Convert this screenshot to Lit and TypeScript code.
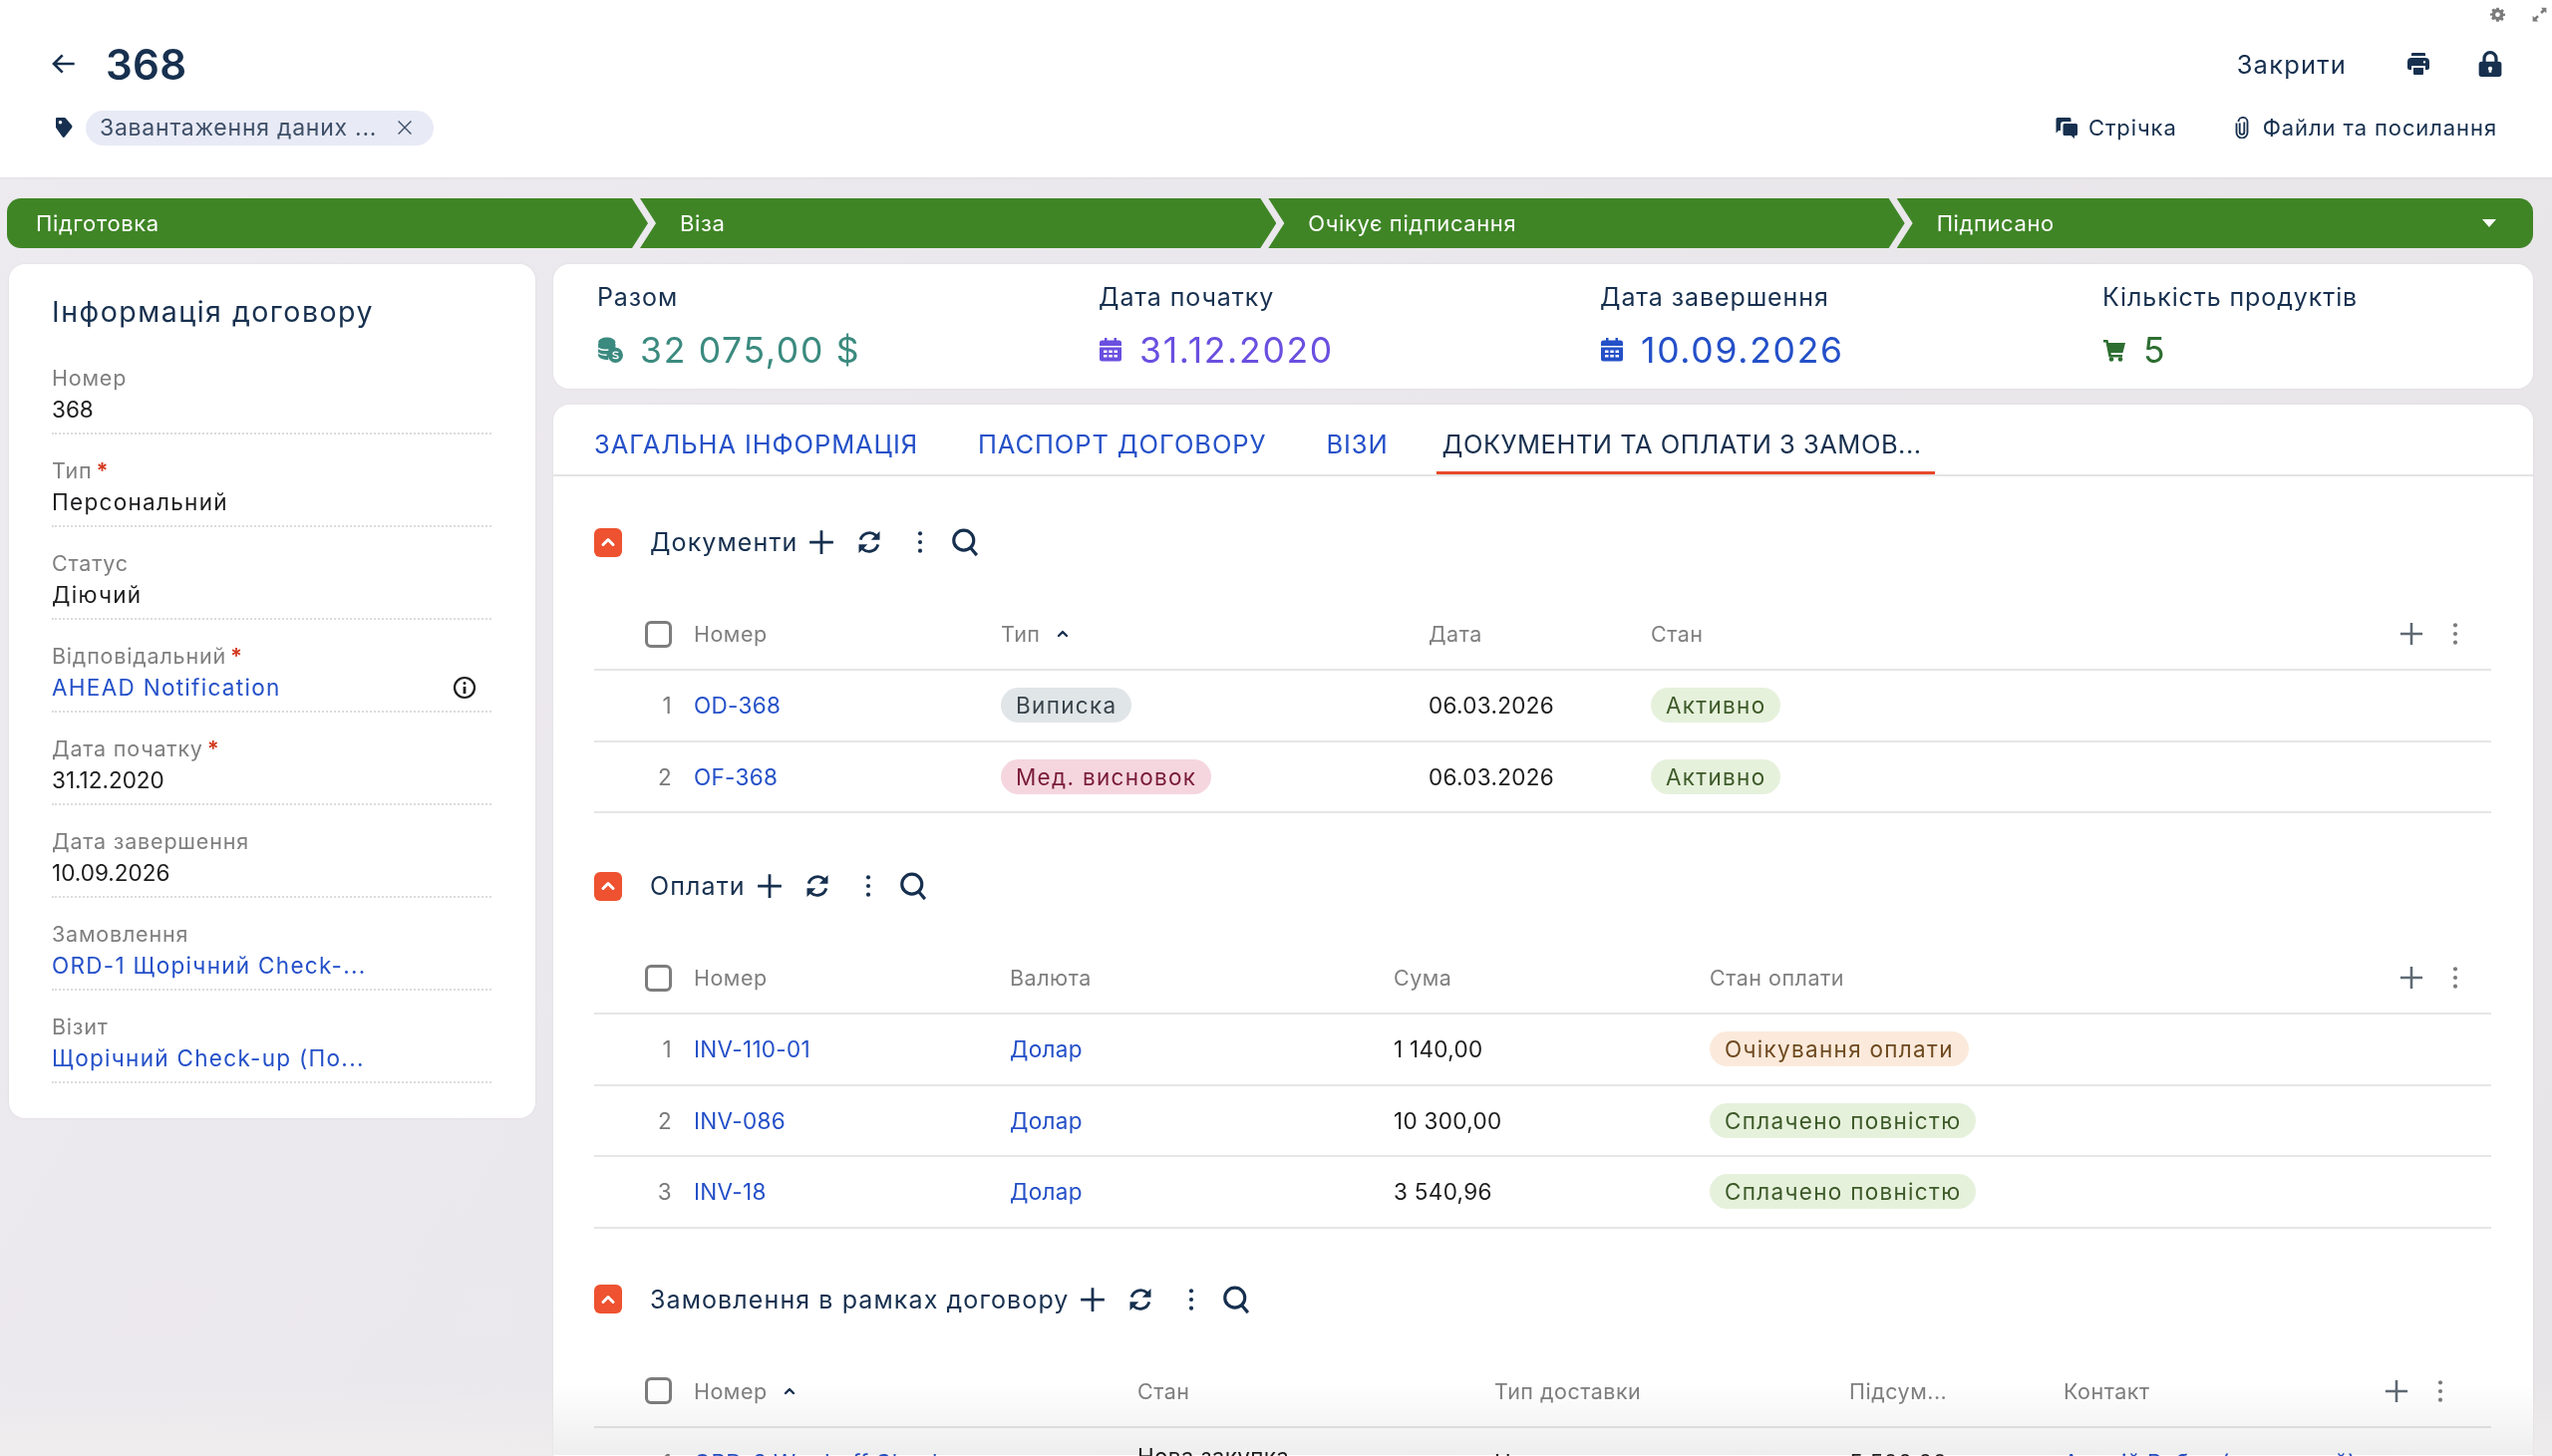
import { LitElement, html, css, svg } from "lit";
import { customElement } from "lit/decorators.js";

const I = {
  back: svg`<path d="M20 12H5M11 5.500 4.500 12l6.500 6.500" fill="none" stroke="currentColor" stroke-width="2"/>`,
  tag: svg`<path fill-rule="evenodd" d="M5 2h7.500a2 2 0 0 1 1.500.7l6 7a2 2 0 0 1 0 2.600l-7 9a1.500 1.500 0 0 1-2.400 0L4 12V3a1 1 0 0 1 1-1zm3.500 3a1.800 1.800 0 1 0 0 3.600 1.800 1.800 0 0 0 0-3.600z" fill="currentColor"/>`,
  close: svg`<path d="M5 5l14 14M19 5 5 19" stroke="currentColor" stroke-width="1.500" fill="none"/>`,
  printer: svg`<path fill="currentColor" fill-rule="evenodd" d="M6 1h12a1 1 0 0 1 1 1v2H5V2a1 1 0 0 1 1-1zM5 6h14a4 4 0 0 1 4 4v6a2 2 0 0 1-2 2h-2v-4H5v4H3a2 2 0 0 1-2-2v-6a4 4 0 0 1 4-4zm13 3a1.200 1.200 0 1 0 0 2.400A1.200 1.200 0 0 0 18 9zM7 16h10v6a1 1 0 0 1-1 1H8a1 1 0 0 1-1-1z"/>`,
  lock: svg`<path fill-rule="evenodd" fill="currentColor" d="M12 0a7 7 0 0 1 7 7v3h1a2.500 2.500 0 0 1 2.500 2.500v9A2.500 2.500 0 0 1 20 24H4a2.500 2.500 0 0 1-2.500-2.500v-9A2.500 2.500 0 0 1 4 10h1V7a7 7 0 0 1 7-7zm0 3a4 4 0 0 0-4 4v3h8V7a4 4 0 0 0-4-4zm0 11.500a2 2 0 0 0-1.200 3.600V20h2.400v-1.900A2 2 0 0 0 12 14.500z"/>`,
  chat: svg`<path fill="currentColor" d="M3 2h12a1.500 1.500 0 0 1 1.500 1.500V6H9a3 3 0 0 0-3 3v6H4l-2.500 2.500V3.500A1.500 1.500 0 0 1 3 2zM10 8h11.500A1.500 1.500 0 0 1 23 9.500v9a1.500 1.500 0 0 1-1.500 1.500H20v3l-3.500-3H10a1.500 1.500 0 0 1-1.500-1.500v-9A1.500 1.500 0 0 1 10 8z"/>`,
  clip: svg`<path d="M9.500 7v10a2.500 2.500 0 0 0 5 0V6M6 7v10.500a6 6 0 0 0 12 0V6.500a5 5 0 0 0-10-1" fill="none" stroke="currentColor" stroke-width="2"/>`,
  gear: svg`<path fill="currentColor" fill-rule="evenodd" d="M10 1h4l.7 3.200 1.900.8 2.800-1.800 2.800 2.800-1.800 2.800.8 1.900L24 10.500v3.500l-3.200.7-.8 1.900 1.800 2.800-2.800 2.800-2.800-1.800-1.900.8L14 23.500h-4l-.7-3.300-1.900-.8-2.800 1.800-2.800-2.800 1.800-2.800-.8-1.900L0 14v-3.500l3.200-.7.800-1.900L2.200 5.100 5 2.300l2.800 1.800 1.900-.8zM12 8.500a3.800 3.800 0 1 0 0 7.600 3.800 3.800 0 0 0 0-7.600z"/>`,
  expand: svg`<path fill="currentColor" d="M14 1h9v9l-3-3-4 4-3-3 4-4zM10 23H1v-9l3 3 4-4 3 3-4 4z"/>`,
  money: svg`<ellipse cx="9" cy="5" rx="8" ry="4.500" fill="currentColor"/><path fill="currentColor" d="M1 6.500h16V12a8 8 0 0 0-6.500 9.500C5 21 1 19.500 1 17z"/><path d="M1 10.500c2 1.500 6 2 9.500 1.500M1 15c2 1.500 5 2 8 1.800" stroke="#fff" stroke-width="1.200" fill="none"/><circle cx="17" cy="17" r="7" fill="currentColor"/><path d="M19.500 14.700c-.5-.9-4.500-1.300-4.700.7-.2 2 4.600 1.200 4.600 3.200 0 1.800-4 1.600-5 .4" stroke="#fff" stroke-width="1.300" fill="none"/>`,
  cal: svg`<path fill="currentColor" fill-rule="evenodd" d="M6 0h2.500v2.500h7V0H18v2.500h2.500A2.500 2.500 0 0 1 23 5v3H1V5a2.500 2.500 0 0 1 2.500-2.500H6zM1 9.500h22V21a2.500 2.500 0 0 1-2.500 2.500h-17A2.500 2.500 0 0 1 1 21zm4 3v2.500h3.500v-2.500zm5.300 0v2.500h3.500v-2.500zm5.200 0v2.500H19v-2.500zM5 17v2.500h3.500V17zm5.300 0v2.500h3.500V17zm5.200 0v2.500H19V17z"/>`,
  cart: svg`<path fill="currentColor" d="M1 2h4.500l.7 3H23l-2.500 10H8.500l.4 2H20v2.500H6.500L3.500 4.500H1z"/><circle cx="9" cy="21.500" r="2.300" fill="currentColor"/><circle cx="18" cy="21.500" r="2.300" fill="currentColor"/>`,
  info: svg`<circle cx="12" cy="12" r="10" fill="none" stroke="currentColor" stroke-width="2.200"/><circle cx="12" cy="7.500" r="1.500" fill="currentColor"/><path d="M12 11v7" stroke="currentColor" stroke-width="2.800"/>`,
  chev: svg`<path d="M6 15l6-6 6 6" fill="none" stroke="currentColor" stroke-width="3.600" stroke-linecap="round" stroke-linejoin="round"/>`,
  plus: svg`<path d="M12 2.500v19M2.500 12h19" stroke="currentColor" stroke-width="2.200" fill="none"/>`,
  sync: svg`<path d="M4.500 10a8 8 0 0 1 13-4l1.500 1.500M19.500 14a8 8 0 0 1-13 4L5 16.500" fill="none" stroke="currentColor" stroke-width="2.500"/><path d="M21 2.500v7.500h-7.500zM3 21.500V14h7.500z" fill="currentColor"/>`,
  dots: svg`<circle cx="12" cy="4" r="1.900" fill="currentColor"/><circle cx="12" cy="12" r="1.900" fill="currentColor"/><circle cx="12" cy="20" r="1.900" fill="currentColor"/>`,
  search: svg`<circle cx="11" cy="10.500" r="8" fill="none" stroke="currentColor" stroke-width="2.500"/><path d="M16 16l5.500 6.500" stroke="currentColor" stroke-width="2.500"/>`,
};
const ic = (p: unknown, size: number, cls = "") =>
  html`<svg class="ic ${cls}" viewBox="0 0 24 24" width=${size} height=${size}>${p}</svg>`;

type Cell = { t: string; k?: string; c?: string };

@customElement("app-root")
export class AppRoot extends LitElement {
  static styles = css`
    :host {
      display: block; height: 100vh; overflow: hidden; position: relative;
      font-family: Inter, "Liberation Sans", sans-serif; color: #17304f;
      background: linear-gradient(180deg, #eeebeb00 calc(100% - 72px), #f1eeeecc), linear-gradient(120deg, #edeaf0, #e7e5e7);
    }
    .ic { display: block; flex: none; }
    .link { color: #2450c8; text-decoration: none; }

    header { height: 178px; background: #fff; box-sizing: border-box; padding: 0 52px; display: flex; flex-direction: column; position: relative; box-shadow: 0 1px 2px #0000000d; }
    .mini { position: absolute; top: 7px; right: 5px; display: flex; gap: 27px; color: #7b7b7b; }
    .h1 { height: 74px; margin-top: 27px; display: flex; align-items: center; }
    .h1 .back { margin: 0 26px 0 -4px; }
    .h1 .num { font-size: 42px; font-weight: 600; letter-spacing: 0.3px; }
    .spacer { flex: 1; }
    .close { font-size: 25.500px; margin-right: 60px; letter-spacing: 1.200px; }
    .h1 .print { margin-right: 47px; }
    .h1 .lock { margin-right: -3px; }
    .h2 { display: flex; align-items: center; margin-top: 9px; height: 36px; }
    .h2 .tagi { margin-right: 10px; margin-left: 0; }
    .chip { height: 35px; width: 349px; box-sizing: border-box; border-radius: 18px; background: #e8eaf6; display: flex; align-items: center; justify-content: space-between; padding: 0 18px 0 14px; font-size: 23px; letter-spacing: 0.750px; color: #3f5068; }
    .links { display: flex; align-items: center; font-size: 22px; letter-spacing: 0.900px; padding-right: 3px; }
    .links svg { margin-right: 10px; }
    .links .l1 { margin-right: 54px; }

    .bar { margin: 21px 19px 0 7px; height: 50px; display: grid; grid-template-columns: 643px 1fr 1fr 1fr; }
    .seg { background: #3f8526; color: #fff; font-size: 22px; letter-spacing: 0.600px; display: flex; align-items: center; justify-content: space-between; margin-left: -8px; padding-left: 40px; clip-path: polygon(0 0, calc(100% - 16px) 0, 100% 50%, calc(100% - 16px) 100%, 0 100%, 16px 50%); }
    .seg:first-child { margin-left: 0; padding-left: 29px; border-radius: 14px 0 0 14px; clip-path: polygon(0 0, calc(100% - 16px) 0, 100% 50%, calc(100% - 16px) 100%, 0 100%); }
    .seg:last-child { border-radius: 0 14px 14px 0; padding-right: 37px; clip-path: polygon(0 0, 100% 0, 100% 100%, 0 100%, 16px 50%); }
    .tri { width: 0; height: 0; border: 7px solid transparent; border-top: 8px solid #fff; border-bottom: 0; }

    main { display: grid; grid-template-columns: 528px 1fr; gap: 18px; margin: 16px 19px 0 9px; align-items: start; }
    .card { background: #fff; border-radius: 16px; box-shadow: 0 0 3px #0000000f; }
    .info { padding: 30px 44px 14px 43px; box-sizing: border-box; }
    .info h2 { font-size: 28.500px; font-weight: 400; letter-spacing: 1.500px; margin: 0 0 33px; height: 36px; line-height: 36px; }
    .f { height: 72px; box-sizing: border-box; border-bottom: 2px dotted #dcdcdc; margin-bottom: 21px; }
    .f .lb { font-size: 21.500px; letter-spacing: 0.800px; color: #7f7f7f; height: 30px; line-height: 30px; }
    .req { color: #d33a1e; font-weight: 700; margin-left: 4px; }
    .f .val { font-size: 22.500px; letter-spacing: 1.300px; color: #1d1d1f; height: 34px; line-height: 34px; display: flex; justify-content: space-between; align-items: center; padding-right: 15px; white-space: nowrap; }
    .f .val.digits { letter-spacing: 0; }

    .right { display: flex; flex-direction: column; gap: 16px; }
    .stats { height: 125px; box-sizing: border-box; display: grid; grid-template-columns: 503px 503px 504px 1fr; padding: 16px 0 0 44px; }
    .stat .lb { font-size: 25px; letter-spacing: 0.9px; height: 34px; line-height: 34px; }
    .stat .v { display: flex; align-items: center; gap: 17px; margin-top: 17px; font-size: 35.500px; height: 38px; letter-spacing: 1.700px; }
    .teal { color: #3b8a7f; } .violet { color: #6a4fe0; } .blue { color: #2450c8; } .green { color: #2d6e31; }

    .tabs-card { height: 1100px; position: relative; }
    .tabs-card::after { content: ""; position: absolute; left: 0; right: 0; top: 982px; height: 72px; background: linear-gradient(180deg, #ffffff, #eeeeee); mix-blend-mode: multiply; pointer-events: none; }
    .tabs { height: 70px; border-bottom: 2px solid #e4e4e4; display: flex; padding-left: 41px; gap: 60px; }
    .tab { font-size: 25.500px; letter-spacing: 0.900px; color: #2450c8; display: flex; align-items: center; height: 70px; padding: 8px 0 0; box-sizing: border-box; white-space: nowrap; }
    .tab.on { color: #17304f; letter-spacing: 0.500px; box-shadow: inset 0 -3px 0 #e8492a; padding: 8px 13px 0 6px; margin-left: -12px; }

    .sec { padding: 0 42px 0 41px; }
    .sh { display: flex; align-items: center; height: 46px; margin-top: 43px; }
    .sec + .sec .sh { margin-top: 50px; }
    .sec:last-child .sh { margin-top: 48px; }
    .tg { width: 28px; height: 29px; border-radius: 6px; background: #ee5230; color: #fff; display: flex; align-items: center; justify-content: center; margin-right: 28px; }
    .sh .ti { font-size: 25px; letter-spacing: 1.100px; margin-right: 9px; }
    .sh .p { margin-right: 19px; }
    .sh .s { margin-right: 24px; }
    .sh .d { margin-right: 17px; }

    .row { display: grid; align-items: center; height: 71.500px; box-sizing: border-box; border-bottom: 2px solid #e6e6e6; font-size: 22.500px; letter-spacing: 0.300px; color: #1d1d1f; }
    .row.hd { height: 105px; padding-top: 33px; font-size: 21.500px; letter-spacing: 0.500px; color: #7f7f7f; margin-top: 1px; }
    .row > div { min-width: 0; white-space: nowrap; display: flex; align-items: center; }
    .sel { justify-content: flex-end; padding-right: 22px; }
    .idx { color: #7a7a7a; }
    .cb { width: 27px; height: 27px; box-sizing: border-box; border: 3px solid #7d7d7d; border-radius: 6px; }
    .sort { margin-left: 14px; color: #17304f; }
    .row .end { justify-content: flex-end; gap: 17px; color: #7a7a7a; padding-right: 23px; }
    .wide .row .end { padding-right: 38px; }
    .end .plus { color: #5f6a74; }
    .pill { height: 35px; border-radius: 18px; padding: 0 15px; display: flex; align-items: center; font-size: 22.500px; letter-spacing: 1.300px; }
    .grey { background: #e0e5e8; color: #38434a; }
    .rose { background: #f5d6df; color: #7a1c38; }
    .ok { background: #e6f1dc; color: #3d5a28; }
    .wait { background: #fbeadb; color: #6f4a20; }
    .row .two { padding-bottom: 12px; }
  `;

  private field(lb: string, val: unknown, req = false, digits = false) {
    return html`<div class="f"><div class="lb">${lb}${req ? html`<span class="req">*</span>` : ""}</div><div class="val ${digits ? "digits" : ""}">${val}</div></div>`;
  }

  private cell(c: Cell) {
    if (c.k === "link") return html`<a class="link">${c.t}</a>`;
    if (c.k === "pill") return html`<span class="pill ${c.c}">${c.t}</span>`;
    return c.t;
  }

  private section(title: string, cols: string, heads: [string, boolean][], rows: Cell[][], wide = false) {
    const st = `grid-template-columns:${cols}`;
    return html`<section class="sec ${wide ? "wide" : ""}">
      <div class="sh">
        <span class="tg">${ic(I.chev, 20)}</span>
        <span class="ti">${title}</span>
        <span class="p">${ic(I.plus, 30)}</span>
        <span class="s">${ic(I.sync, 28)}</span>
        <span class="d">${ic(I.dots, 26)}</span>
        ${ic(I.search, 30)}
      </div>
      <div class="row hd" style=${st}>
        <div class="sel"><span class="cb"></span></div>
        ${heads.map(([h, s]) => html`<div>${h}${s ? html`<span class="sort">${ic(I.chev, 16)}</span>` : ""}</div>`)}
        <div class="end"><span class="plus">${ic(I.plus, 28)}</span>${ic(I.dots, 26)}</div>
      </div>
      ${rows.map((r, i) => html`<div class="row" style=${st}>
        <div class="sel idx">${i + 1}</div>
        ${r.map((c) => html`<div class=${c.k === "two" ? "two" : ""}>${this.cell(c)}</div>`)}
        <div></div>
      </div>`)}
    </section>`;
  }

  render() {
    const L = (t: string): Cell => ({ t, k: "link" });
    const P = (t: string, c: string): Cell => ({ t, k: "pill", c });
    const T = (t: string): Cell => ({ t });
    return html`
      <header>
        <div class="mini">${ic(I.gear, 15)}${ic(I.expand, 15)}</div>
        <div class="h1">
          <span class="back">${ic(I.back, 32)}</span>
          <span class="num">368</span>
          <span class="spacer"></span>
          <span class="close">Закрити</span>
          <span class="print">${ic(I.printer, 24)}</span>
          <span class="lock">${ic(I.lock, 26)}</span>
        </div>
        <div class="h2">
          <span class="tagi">${ic(I.tag, 24)}</span>
          <span class="chip"><span>Завантаження даних ...</span>${ic(I.close, 22)}</span>
          <span class="spacer"></span>
          <div class="links">
            ${ic(I.chat, 24)}<span class="l1">Стрічка</span>
            ${ic(I.clip, 22)}<span>Файли та посилання</span>
          </div>
        </div>
      </header>

      <div class="bar">
        <div class="seg">Підготовка</div>
        <div class="seg">Віза</div>
        <div class="seg">Очікує підписання</div>
        <div class="seg">Підписано<span class="tri"></span></div>
      </div>

      <main>
        <aside class="card info">
          <h2>Інформація договору</h2>
          ${this.field("Номер", "368", false, true)}
          ${this.field("Тип", "Персональний", true)}
          ${this.field("Статус", "Діючий")}
          ${this.field("Відповідальний", html`<a class="link">AHEAD Notification</a><span>${ic(I.info, 24)}</span>`, true)}
          ${this.field("Дата початку", "31.12.2020", true, true)}
          ${this.field("Дата завершення", "10.09.2026", false, true)}
          ${this.field("Замовлення", html`<a class="link">ORD-1 Щорічний Check-...</a>`)}
          ${this.field("Візит", html`<a class="link">Щорічний Check-up (По...</a>`)}
        </aside>
        <div class="right">
          <div class="card stats">
            <div class="stat"><div class="lb">Разом</div><div class="v teal">${ic(I.money, 26)}32 075,00 $</div></div>
            <div class="stat"><div class="lb">Дата початку</div><div class="v violet">${ic(I.cal, 24)}31.12.2020</div></div>
            <div class="stat"><div class="lb">Дата завершення</div><div class="v blue">${ic(I.cal, 24)}10.09.2026</div></div>
            <div class="stat"><div class="lb">Кількість продуктів</div><div class="v green">${ic(I.cart, 24)}5</div></div>
          </div>
          <div class="card tabs-card">
            <nav class="tabs">
              <span class="tab">ЗАГАЛЬНА ІНФОРМАЦІЯ</span>
              <span class="tab">ПАСПОРТ ДОГОВОРУ</span>
              <span class="tab">ВІЗИ</span>
              <span class="tab on">ДОКУМЕНТИ ТА ОПЛАТИ З ЗАМОВ...</span>
            </nav>
            ${this.section("Документи", "100px 308px 429px 223px 1fr 120px",
              [["Номер", false], ["Тип", true], ["Дата", false], ["Стан", false]],
              [[L("OD-368"), P("Виписка", "grey"), T("06.03.2026"), P("Активно", "ok")],
               [L("OF-368"), P("Мед. висновок", "rose"), T("06.03.2026"), P("Активно", "ok")]])}
            ${this.section("Оплати", "100px 317px 385px 317px 1fr 120px",
              [["Номер", false], ["Валюта", false], ["Сума", false], ["Стан оплати", false]],
              [[L("INV-110-01"), L("Долар"), T("1 140,00"), P("Очікування оплати", "wait")],
               [L("INV-086"), L("Долар"), T("10 300,00"), P("Сплачено повністю", "ok")],
               [L("INV-18"), L("Долар"), T("3 540,96"), P("Сплачено повністю", "ok")]])}
            ${this.section("Замовлення в рамках договору", "100px 445px 358px 356px 215px 1fr 135px",
              [["Номер", true], ["Стан", false], ["Тип доставки", false], ["Підсум...", false], ["Контакт", false]],
              [[L("ORD-3 Wardroff Check"), { t: "Нова закупка", k: "two" }, T("Нова"), T("5 500,00"), L("Андрій Робак (молодший)")]], true)}
          </div>
        </div>
      </main>
    `;
  }
}
